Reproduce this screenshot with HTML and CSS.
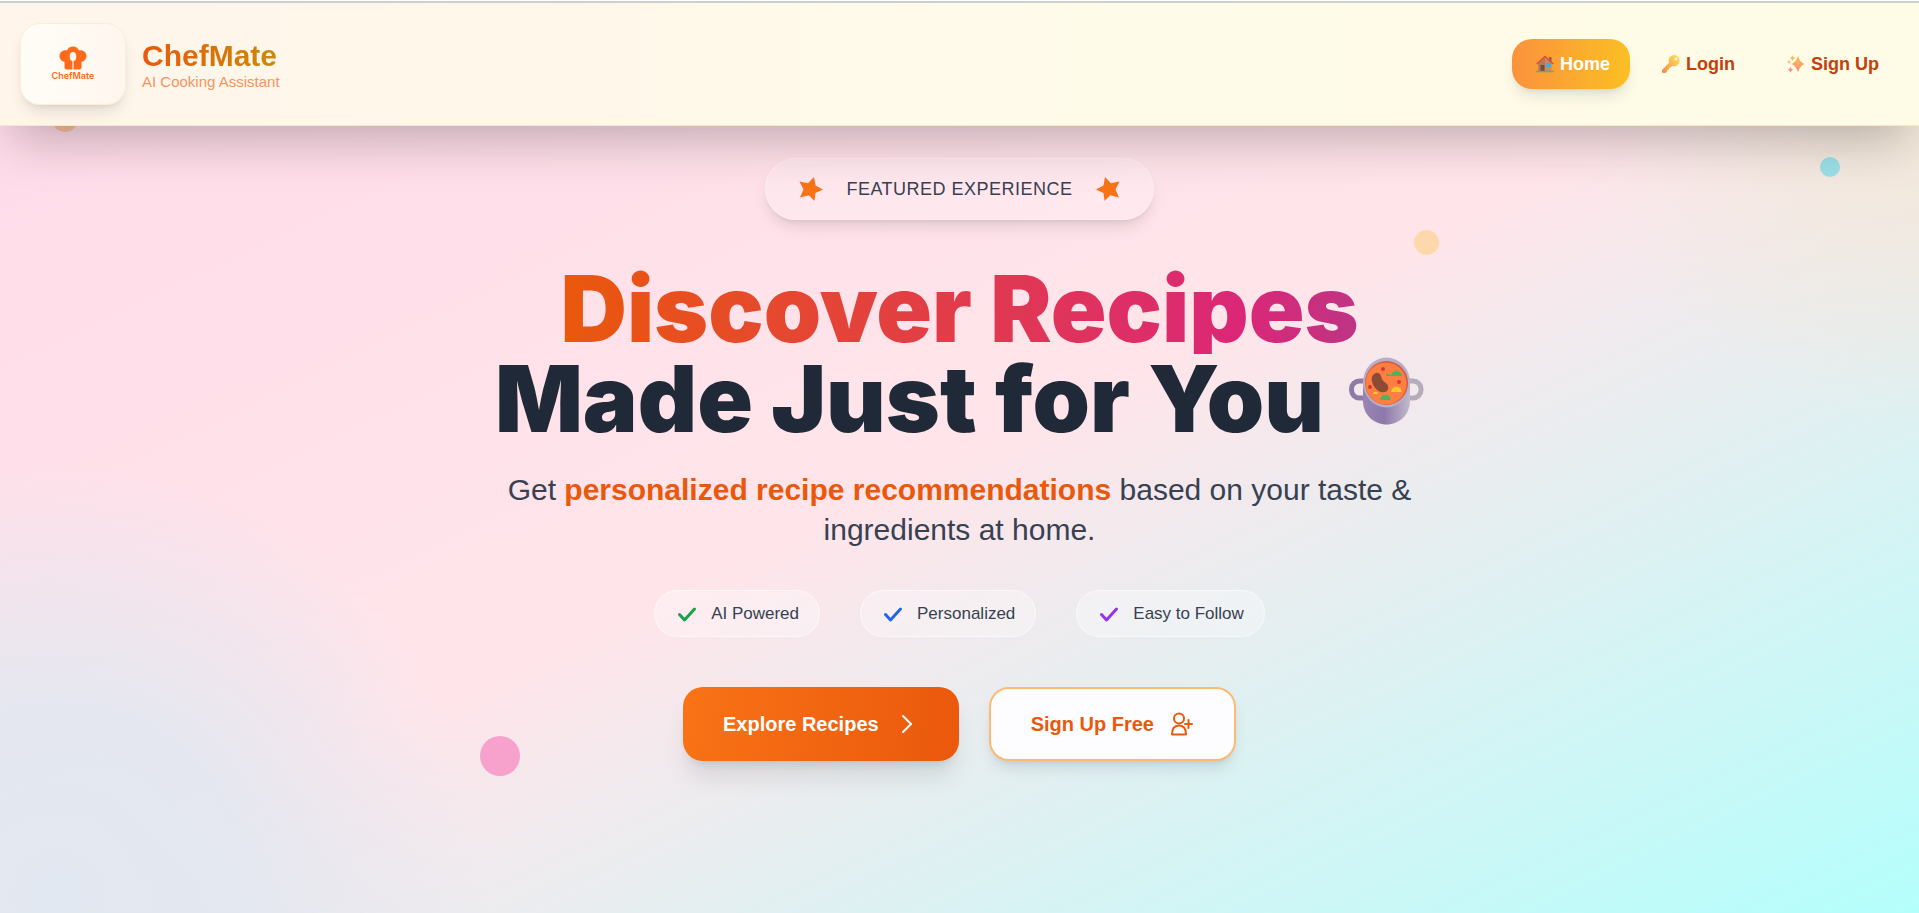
FILE: index.html
```html
<!DOCTYPE html>
<html lang="en">
<head>
    <meta charset="UTF-8">
    <meta name="viewport" content="width=device-width, initial-scale=1.0">
    <title>ChefMate</title>
    <link rel="stylesheet" href="styles.css">
</head>
<body>
    <header class="navbar">
        <a class="brand" href="#">
            <span class="logo">
                <svg class="logo-icon" viewBox="0 0 28 24" aria-hidden="true">
                    <path fill="#ff6a1a" d="M5.500 21V15.800C2.600 15.400.500 13 .500 10 .500 6.300 4 3.600 8 4.500 9 2 11.300.500 14 .500s5 1.500 6 4c4-.9 7.500 1.800 7.500 5.500 0 3-2.100 5.400-5 5.800V21c0 1.500-.7 2.500-2 2.500h-13c-1.300 0-2-1-2-2.500z"/>
                    <ellipse cx="14" cy="10.500" rx="3.300" ry="4.500" fill="#fff8f0"/>
                    <path d="M14 14v10" stroke="#fff8f0" stroke-width="1.200"/>
                </svg>
                <span class="logo-text">ChefMate</span>
            </span>
            <span class="brand-text">
                <span class="brand-name">ChefMate</span>
                <span class="brand-tag">AI Cooking Assistant</span>
            </span>
        </a>
        <nav class="nav-links">
            <a class="nav-link active" href="#">
                <svg class="nav-icon" viewBox="0 0 18 18" aria-hidden="true">
                    <rect x="13" y="2" width="2.500" height="5" fill="#9b5b48"/>
                    <path d="M2.500 8.500 9 2.500l6.500 6V16h-13z" fill="#c98a5d"/>
                    <path d="M2.500 8.500 9 2.500V16H2.500z" fill="#b07a58"/>
                    <rect x="4.500" y="10" width="4" height="6" fill="#7a4a3a"/>
                    <rect x="10.500" y="8" width="4.500" height="4" fill="#2fb0f2"/>
                    <path d="M.800 9 9 1.500 17.200 9" fill="none" stroke="#e0483a" stroke-width="1.600"/>
                    <rect x="0" y="15.800" width="18" height="1.500" rx=".7" fill="#4fb477"/>
                </svg>
                Home
            </a>
            <a class="nav-link" href="#">
                <svg class="nav-icon" viewBox="0 0 18 18" aria-hidden="true">
                    <defs>
                        <linearGradient id="key" x1="1" y1="0" x2="0" y2="1">
                            <stop offset="0" stop-color="#ffe05a"/>
                            <stop offset="1" stop-color="#f58a4b"/>
                        </linearGradient>
                    </defs>
                    <path fill="url(#key)" fill-rule="evenodd" d="M12.200 0a5.600 5.600 0 1 1-2 10.900L8.500 12.600l-1.300.2-.3 1.700-1.500.3-.2 1.400L3.500 18H.800L0 17v-2l7.100-7.200A5.600 5.600 0 0 1 12.200 0zM14 2.500a1.500 1.500 0 1 0 0 3 1.500 1.500 0 0 0 0-3z"/>
                </svg>
                Login
            </a>
            <a class="nav-link" href="#">
                <svg class="nav-icon" viewBox="0 0 18 18" aria-hidden="true">
                    <defs>
                        <linearGradient id="spark" x1="0" y1="0" x2="0" y2="1">
                            <stop offset="0" stop-color="#fbc54a"/>
                            <stop offset="1" stop-color="#f78a7d"/>
                        </linearGradient>
                    </defs>
                    <path fill="url(#spark)" d="M11 .5c1.300 4.500 2.700 7 7 8.500-4.300 1.500-5.700 4-7 8.500C9.700 13 8.300 10.500 4 9c4.300-1.500 5.700-4 7-8.500z"/>
                    <path fill="url(#spark)" d="M5.500 0c.6 1.900 1 2.500 2.800 3C6.500 3.500 6.100 4.100 5.500 6 4.900 4.100 4.500 3.500 2.700 3 4.500 2.500 4.900 1.900 5.500 0zM3.500 11.500c.6 2 1.100 2.700 3 3.200-1.900.5-2.400 1.200-3 3.200-.6-2-1.100-2.700-3-3.200 1.900-.5 2.400-1.200 3-3.200zM2 4.800 2.600 6.400 4 7 2.600 7.600 2 9.200 1.400 7.600 0 7 1.400 6.400z"/>
                </svg>
                Sign Up
            </a>
        </nav>
    </header>

    <main class="hero">
        <span class="bubble bubble-orange"></span>
        <span class="bubble bubble-cyan"></span>
        <span class="bubble bubble-yellow"></span>
        <span class="bubble bubble-pink"></span>

        <div class="featured">
            <svg class="star" viewBox="0 0 24 24" aria-hidden="true"><path d="M24 12.500 16.500 16 15.500 24 9.800 18.300 1 20.500 4.500 12.500.500 4.500l8.500 1.700L15 0l1.500 8.500z"/></svg>
            <span>FEATURED EXPERIENCE</span>
            <svg class="star" viewBox="0 0 24 24" aria-hidden="true"><path d="M0 12.500 7.500 16 8.500 24l5.700-5.700 8.800 2.200-3.500-8L23.500 4.500 15 6.200 9 0 7.500 8.500z"/></svg>
        </div>

        <h1 class="title">
            <span class="title-gradient">Discover Recipes</span>
            <span class="title-line">
                Made Just for You
                <svg class="pot" viewBox="0 0 76 68" aria-hidden="true">
                    <defs>
                        <linearGradient id="potBody" x1="0" y1="0" x2="1" y2="0">
                            <stop offset="0" stop-color="#9a86b2"/>
                            <stop offset=".45" stop-color="#8d78ab"/>
                            <stop offset="1" stop-color="#c2bbc9"/>
                        </linearGradient>
                    </defs>
                    <rect x="3.500" y="24" width="20" height="17" rx="8" fill="none" stroke="#8f7ba8" stroke-width="5"/>
                    <rect x="53" y="24" width="20" height="17" rx="8" fill="none" stroke="#b5adbd" stroke-width="5"/>
                    <path d="M15 24h47v20c0 14-11 23.500-23.500 23.500S15 58 15 44z" fill="url(#potBody)"/>
                    <ellipse cx="38.500" cy="25.500" rx="23.500" ry="25" fill="#b9aec6"/>
                    <ellipse cx="38.500" cy="26" rx="21.500" ry="22" fill="#d95a3c"/>
                    <ellipse cx="38" cy="26.500" rx="20.500" ry="21" fill="#fd7f42"/>
                    <path d="M26 17c4-3 7 0 7.500 3.500S37 25 39 27s2 7-2 8-8-1-10.500-5S22 20 26 17z" fill="#8d4a35"/>
                    <path d="M43 19c1-7 10-7 11 0zM32 43c1-7 10-7 11 0z" fill="#4fb35c"/>
                    <path d="M38 19c0-3 4-3 5 0z" fill="#4fb35c"/>
                    <path d="M43 35c1-7 10-7 11 0zM25 37c1-3 4-3 5 0z" fill="#ffc928"/>
                    <circle cx="35" cy="12" r="2" fill="#d8392f"/>
                    <circle cx="51" cy="25" r="2" fill="#d8392f"/>
                    <circle cx="22" cy="30" r="2" fill="#d8392f"/>
                </svg>
            </span>
        </h1>

        <p class="subtitle">Get <strong>personalized recipe recommendations</strong> based on your taste &amp; ingredients at home.</p>

        <ul class="features">
            <li class="feature green"><svg class="check" viewBox="0 0 24 24" aria-hidden="true"><path d="M4.500 12.500 9.500 18 19.500 7"/></svg>AI Powered</li>
            <li class="feature blue"><svg class="check" viewBox="0 0 24 24" aria-hidden="true"><path d="M4.500 12.500 9.500 18 19.500 7"/></svg>Personalized</li>
            <li class="feature purple"><svg class="check" viewBox="0 0 24 24" aria-hidden="true"><path d="M4.500 12.500 9.500 18 19.500 7"/></svg>Easy to Follow</li>
        </ul>

        <div class="actions">
            <a class="btn btn-primary" href="#">
                Explore Recipes
                <svg class="btn-icon" viewBox="0 0 24 24" aria-hidden="true"><path d="M8 4l8 8-8 8"/></svg>
            </a>
            <a class="btn btn-secondary" href="#">
                Sign Up Free
                <svg class="btn-icon" viewBox="0 0 24 24" aria-hidden="true"><circle cx="9" cy="6.500" r="5"/><path d="M2 22.500c0-6 2.500-9 7-9s7 3 7 9zM18.500 8v8M15 12h7"/></svg>
            </a>
        </div>
    </main>
</body>
</html>
```
FILE: styles.css
```css
* {
    box-sizing: border-box;
}

body {
    margin: 0;
    min-height: 100vh;
    font-family: "Liberation Sans", Arial, sans-serif;
    color: #374151;
    border-top: 1px solid #fff;
    background:
        radial-gradient(circle at 3% 98%, #e2e8f1 0%, rgba(226, 232, 241, 0.9) 9%, rgba(226, 232, 241, 0) 21%),
        radial-gradient(circle at 100% 10%, #f3e8d8 0%, rgba(243, 232, 216, 0) 16%),
        linear-gradient(to bottom right, #ffdae9, #ffe5ea 50%, #b4fffc);
    overflow-x: hidden;
}

a {
    text-decoration: none;
}

/* navbar */
.navbar {
    position: relative;
    z-index: 2;
    display: flex;
    justify-content: space-between;
    align-items: center;
    height: 125px;
    padding: 0 20px;
    background: linear-gradient(to right, #fff5eb, #fffbe9 60%, #fefbe6);
    border-top: 2px solid #cbcfcf;
    border-bottom: 1px solid #fde6c4;
    box-shadow: 0 25px 50px -12px rgba(0, 0, 0, 0.25);
}

.brand {
    display: flex;
    align-items: center;
    gap: 16px;
}

.logo {
    display: flex;
    flex-direction: column;
    align-items: center;
    justify-content: center;
    width: 106px;
    height: 82px;
    border: 1px solid #ffedd5;
    border-radius: 20px;
    background: linear-gradient(to right, #fffdf8, #fff6ee);
    box-shadow: 0 10px 15px -3px rgba(0, 0, 0, 0.1), 0 4px 6px -4px rgba(0, 0, 0, 0.1);
}

.logo-icon {
    width: 28px;
    height: 24px;
}

.logo-text {
    font-family: Inter, sans-serif;
    font-size: 9px;
    font-weight: 600;
    line-height: 12px;
    color: #ff6a1a;
}

.brand-text {
    display: flex;
    flex-direction: column;
    padding-top: 4px;
}

.brand-name {
    font-size: 30px;
    font-weight: 700;
    line-height: 32px;
    color: transparent;
    background: linear-gradient(to right, #ea580c, #ca8a04);
    background-clip: text;
    align-self: flex-start;
}

.brand-tag {
    font-size: 15px;
    line-height: 20px;
    color: #f4935f;
}

.nav-links {
    display: flex;
    gap: 8px;
}

.nav-link {
    display: flex;
    align-items: center;
    gap: 6px;
    height: 50px;
    padding: 0 20px 0 24px;
    border-radius: 20px;
    font-size: 18px;
    font-weight: 700;
    color: #c2410c;
}

.nav-link.active {
    color: #fff;
    background: linear-gradient(to right, #fb923c, #fbbf24);
    box-shadow: 0 10px 15px -3px rgba(0, 0, 0, 0.1), 0 4px 6px -4px rgba(0, 0, 0, 0.1);
}

.nav-icon {
    width: 18px;
    height: 18px;
}

/* hero */
.hero {
    position: relative;
    display: flex;
    flex-direction: column;
    align-items: center;
    padding: 32px 20px;
}

.bubble {
    position: absolute;
    border-radius: 50%;
}

.bubble-orange {
    top: -20px;
    left: 52px;
    width: 26px;
    height: 26px;
    background: #fdc1a0;
}

.bubble-cyan {
    top: 31px;
    right: 79px;
    width: 20px;
    height: 20px;
    background: #9adfe8;
}

.bubble-yellow {
    top: 104px;
    right: 25%;
    width: 25px;
    height: 25px;
    background: #fed7aa;
}

.bubble-pink {
    top: 610px;
    left: 25%;
    width: 40px;
    height: 40px;
    background: #f7a1cd;
}

.featured {
    display: flex;
    align-items: center;
    gap: 23px;
    height: 62px;
    margin-bottom: 44px;
    padding: 0 33px;
    border: 1px solid rgba(255, 255, 255, 0.3);
    border-radius: 31px;
    background: rgba(255, 255, 255, 0.2);
    box-shadow: 0 10px 15px -3px rgba(0, 0, 0, 0.1), 0 4px 6px -4px rgba(0, 0, 0, 0.1);
    font-size: 18px;
    letter-spacing: 0.5px;
}

.star {
    width: 24px;
    height: 24px;
    fill: #f97316;
}

.title {
    display: flex;
    flex-direction: column;
    align-items: center;
    margin: 0 0 26px;
    font-family: "Arial Black", Inter, sans-serif;
    font-size: 92px;
    font-weight: 900;
    line-height: 90px;
    color: #1f2937;
}

.title-gradient {
    color: transparent;
    background: linear-gradient(to right, #ea580c, #db2777 85%, #be3484);
    background-clip: text;
}

.title-line {
    display: flex;
    gap: 24px;
}

.pot {
    width: 76px;
    height: 68px;
    margin-top: 3px;
}

.subtitle {
    max-width: 920px;
    margin: 0 0 40px;
    font-size: 30px;
    line-height: 40px;
    text-align: center;
}

.subtitle strong {
    color: #ea580c;
}

.features {
    display: flex;
    gap: 40px;
    margin: 0 0 50px;
    padding: 0;
    list-style: none;
}

.feature {
    display: flex;
    align-items: center;
    gap: 12px;
    height: 47px;
    padding: 0 20px;
    border: 1px solid rgba(255, 255, 255, 0.5);
    border-radius: 24px;
    background: rgba(255, 255, 255, 0.3);
    font-size: 17px;
}

.check {
    width: 24px;
    height: 24px;
    fill: none;
    stroke-width: 3;
    stroke-linecap: round;
    stroke-linejoin: round;
}

.green .check {
    stroke: #16a34a;
}

.blue .check {
    stroke: #2563eb;
}

.purple .check {
    stroke: #9333ea;
}

/* buttons */
.actions {
    display: flex;
    gap: 30px;
}

.btn {
    display: flex;
    align-items: center;
    gap: 16px;
    height: 74px;
    padding: 0 40px;
    border-radius: 20px;
    font-size: 20px;
    font-weight: 700;
}

.btn-primary {
    color: #fff;
    background: linear-gradient(100deg, #f97316, #ea580c);
    box-shadow: 0 20px 25px -5px rgba(0, 0, 0, 0.1), 0 8px 10px -6px rgba(0, 0, 0, 0.1);
}

.btn-secondary {
    color: #ea580c;
    background: #fdfdff;
    border: 2px solid #fdba74;
    box-shadow: 0 10px 15px -3px rgba(0, 0, 0, 0.1), 0 4px 6px -4px rgba(0, 0, 0, 0.1);
}

.btn-icon {
    width: 24px;
    height: 24px;
    fill: none;
    stroke: currentColor;
    stroke-width: 2;
    stroke-linecap: round;
    stroke-linejoin: round;
}
```
